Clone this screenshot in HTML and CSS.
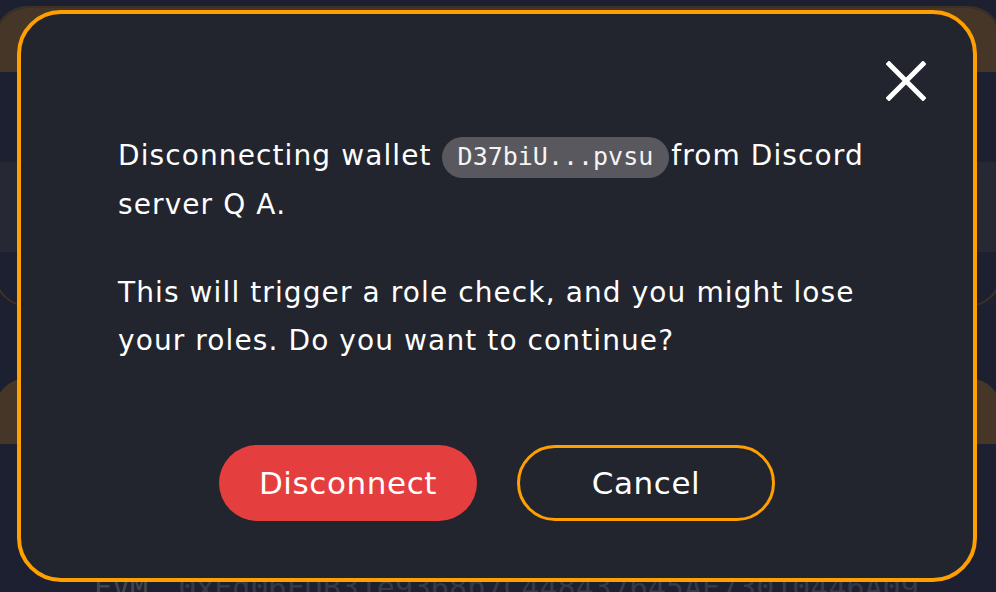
FILE: index.html
```html
<!DOCTYPE html>
<html lang="en">
<head>
<meta charset="utf-8">
<title>Disconnect wallet</title>
<link rel="stylesheet" href="styles.css">
</head>
<body>
<div class="page">
  <section class="card">
    <div class="card-head"></div>
    <div class="card-body">
      <div class="row"></div>
    </div>
  </section>
  <section class="card card-second">
    <div class="card-head"></div>
    <div class="card-body">
      <div class="address"><span class="chain">EVM</span><span class="hash">0xEd06FDB31e9368b7C448437645AE73010446A09</span></div>
    </div>
  </section>
</div>

<div class="overlay">
  <div class="modal" role="dialog">
    <div class="modal-top">
      <button class="close" aria-label="Close">
        <svg width="40" height="40" viewBox="0 0 40 40"><path d="M3 3 L37 37 M37 3 L3 37" stroke="#ffffff" stroke-width="5" stroke-linecap="square" fill="none"/></svg>
      </button>
    </div>
    <div class="message">
      <p>Disconnecting wallet <span class="pill">D37biU...pvsu</span>from Discord server Q A.</p>
      <p>This will trigger a role check, and you might lose your roles. Do you want to continue?</p>
    </div>
    <div class="actions">
      <button class="btn btn-danger">Disconnect</button>
      <button class="btn btn-outline">Cancel</button>
    </div>
  </div>
</div>
</body>
</html>
```

FILE: styles.css
```css
html, body {
  margin: 0;
  padding: 0;
}
body {
  background: #1d2030;
  width: 996px;
  height: 592px;
  overflow: hidden;
  font-family: "DejaVu Sans", "Noto Sans", sans-serif;
  color: #ffffff;
}
.page {
  display: flex;
  flex-direction: column;
  padding-top: 6px;
  margin: 0 -6px;
}
.card {
  height: 301px;
  box-sizing: border-box;
  border: 2px solid #3d3126;
  border-radius: 34px;
  overflow: hidden;
  display: flex;
  flex-direction: column;
  flex: none;
}
.card-head {
  height: 64px;
  background: #463628;
  flex: none;
}
.card-body {
  padding-top: 90px;
  display: flex;
  flex-direction: column;
}
.row {
  height: 90px;
  background: #262834;
}
.card-second {
  margin-top: 71px;
  height: 214px;
  border: none;
  border-radius: 34px 34px 0 0;
}
.card-second .card-head {
  height: 66px;
}
.card-second .card-body {
  padding-top: 126px;
}
.address {
  display: flex;
  gap: 30px;
  padding-left: 100px;
  font-family: "DejaVu Sans Mono", monospace;
  font-size: 30px;
  line-height: 36px;
  color: #363947;
}
.chain {
  color: #44454b;
}

.overlay {
  position: fixed;
  inset: 0;
  display: flex;
  align-items: flex-start;
  padding: 10px 0 0 17px;
}
.modal {
  width: 960px;
  height: 572px;
  box-sizing: border-box;
  background: #22252e;
  border: 4px solid #ff9f00;
  border-radius: 44px;
  padding: 47px 47px 0 47px;
  display: flex;
  flex-direction: column;
}
.modal-top {
  display: flex;
  justify-content: flex-end;
  height: 40px;
  flex: none;
}
.close {
  width: 40px;
  height: 40px;
  padding: 0;
  border: none;
  background: none;
  display: block;
}
.close svg {
  display: block;
}
.message {
  margin: 31px 0 0 50px;
  width: 775px;
  font-size: 28px;
  line-height: 48px;
  letter-spacing: 1.1px;
}
.message p {
  margin: 0;
}
.message p + p {
  margin-top: 40px;
}
.pill {
  background: #58585e;
  border-radius: 22px;
  padding: 5px 16px 7px;
  margin-right: 2px;
  font-family: "DejaVu Sans Mono", monospace;
  font-size: 25px;
  letter-spacing: 0;
  color: #f4f4f4;
}
.actions {
  margin-top: 80px;
  display: flex;
  justify-content: center;
  gap: 40px;
}
.btn {
  width: 258px;
  height: 76px;
  box-sizing: border-box;
  border-radius: 38px;
  font-family: "DejaVu Sans", "Noto Sans", sans-serif;
  font-size: 31px;
  letter-spacing: 0.6px;
  color: #ffffff;
  padding: 0;
  cursor: pointer;
}
.btn-danger {
  background: #e53e3e;
  border: none;
}
.btn-outline {
  background: transparent;
  border: 3px solid #ff9f00;
}
```
